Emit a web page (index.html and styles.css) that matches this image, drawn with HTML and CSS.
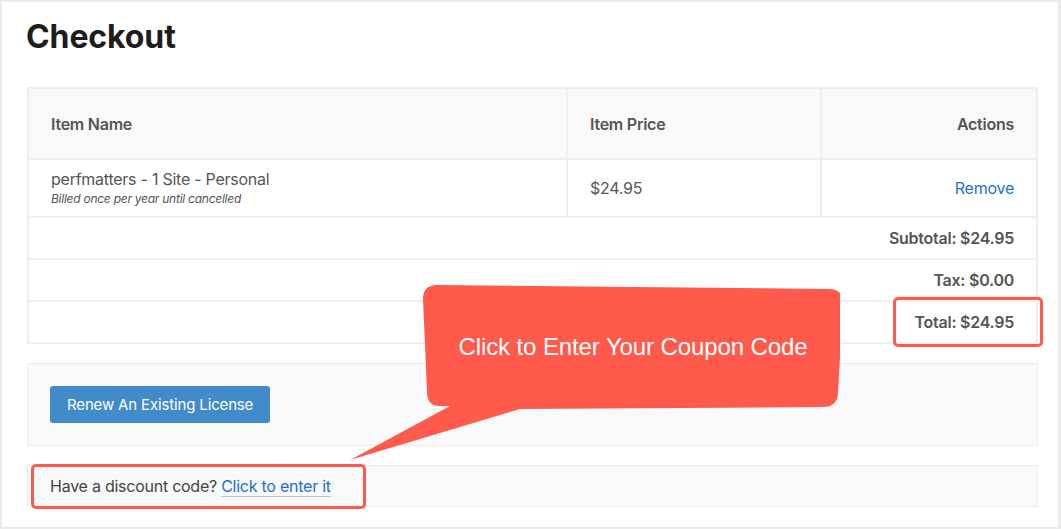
FILE: index.html
```html
<!DOCTYPE html>
<html lang="en">
<head>
    <meta charset="UTF-8">
    <meta name="viewport" content="width=device-width, initial-scale=1.0">
    <title>Checkout</title>
    <link rel="stylesheet" href="styles.css">
</head>
<body>

<div class="frame">
    <h1>Checkout</h1>

    <table class="cart">
        <thead>
            <tr>
                <th class="col-name">Item Name</th>
                <th class="col-price">Item Price</th>
                <th class="col-actions">Actions</th>
            </tr>
        </thead>
        <tbody>
            <tr class="item">
                <td>
                    <div class="item-title">perfmatters - 1 Site - Personal</div>
                    <div class="item-note">Billed once per year until cancelled</div>
                </td>
                <td>$24.95</td>
                <td class="actions"><a href="#">Remove</a></td>
            </tr>
            <tr class="sum"><td colspan="3">Subtotal: $24.95</td></tr>
            <tr class="sum"><td colspan="3">Tax: $0.00</td></tr>
            <tr class="sum"><td colspan="3"><span class="total">Total: $24.95</span></td></tr>
        </tbody>
    </table>

    <div class="panel renew">
        <button class="btn">Renew An Existing License</button>
    </div>

    <div class="panel discount">
        <span class="discount-text">Have a discount code? <a href="#">Click to enter it</a></span>
    </div>

    <!-- annotation callout -->
    <svg class="callout" width="500" height="190" viewBox="340 280 500 190">
        <path d="M437 285 L829 289 Q843 289 843 303 L838 393 Q837 407 823 407 L520 409 L350 460 L450 406 L440 406 Q427 406 427 392 L423 299 Q423 285 437 285 Z" fill="#ff5a4b"/>
    </svg>
    <div class="callout-text">Click to Enter Your Coupon Code</div>
</div>

</body>
</html>
```

FILE: styles.css
```css
body {
    margin: 0;
    font-family: Inter, "Noto Sans", sans-serif;
    letter-spacing: -0.25px;
    background: #ffffff;
}
.frame {
    position: relative;
    box-sizing: border-box;
    height: 529px;
    border: 2px solid #ebebeb;
    border-right-width: 3px;
    padding: 0 21px 0 25px;
}
h1 {
    margin: 0 0 0 -1px;
    padding-top: 15px;
    font-size: 32px;
    line-height: 40px;
    font-weight: 700;
    color: #1d1d1d;
    letter-spacing: -0.1px;
}
.cart {
    width: 1011px;
    margin-top: 30px;
    border-collapse: collapse;
    color: #555555;
    font-size: 16px;
}
.cart th, .cart td {
    border: 2px solid #eeeeee;
    padding: 9px 22px;
    text-align: left;
    line-height: 22px;
}
.cart th {
    background: #f9f9f9;
    font-weight: 600;
    height: 69px;
    padding-top: 0;
    padding-bottom: 0;
}
.col-name { width: 493px; }
.col-price { width: 208px; }
.cart .col-actions, .cart .actions { text-align: right; }
.item td { height: 40px; padding-top: 8px; padding-bottom: 8px; }
.item-title { line-height: 22px; }
.item-note {
    font-size: 12px;
    font-style: italic;
    line-height: 18px;
}
.cart .sum td {
    text-align: right;
    font-weight: 600;
    height: 22px;
    padding-top: 9px;
    padding-bottom: 9px;
}
a {
    color: #2270d0;
    text-decoration: none;
}
.total {
    position: relative;
}
.total::after {
    content: "";
    position: absolute;
    left: -21px;
    right: -29px;
    top: -15px;
    bottom: -15px;
    border: 3px solid #ff5a4b;
    border-radius: 5px;
}
.panel {
    box-sizing: border-box;
    width: 1011px;
    background: #f9f9f9;
    border: 1px solid #ececec;
}
.renew {
    margin-top: 19px;
    height: 83px;
    padding: 22px 22px;
}
.btn {
    height: 37px;
    padding: 0 17px;
    border: none;
    border-radius: 3px;
    background: #428bca;
    color: #ffffff;
    font-family: Inter, "Noto Sans", sans-serif;
    font-size: 15px;
    letter-spacing: -0.15px;
}
.discount {
    margin-top: 19px;
    height: 42px;
    padding: 9px 22px;
    font-size: 16px;
    line-height: 22px;
    color: #444444;
}
.discount-text {
    position: relative;
}
.discount-text a {
    border-bottom: 1px solid #a9c8ee;
}
.discount-text::after {
    content: "";
    position: absolute;
    left: -19px;
    right: -35px;
    top: -12px;
    bottom: -13px;
    border: 3px solid #ff5a4b;
    border-radius: 5px;
}
.callout {
    position: absolute;
    left: 338px;
    top: 278px;
}
.callout-text {
    position: absolute;
    left: 420px;
    top: 331px;
    width: 422px;
    text-align: center;
    font-family: "Liberation Sans", Arial, sans-serif;
    font-size: 24px;
    line-height: 28px;
    letter-spacing: -0.1px;
    color: #ffffff;
}
```
